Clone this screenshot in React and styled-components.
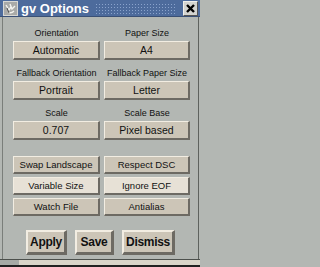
import React from "react";
import styled, { createGlobalStyle } from "styled-components";

const GlobalStyle = createGlobalStyle`
  html, body {
    margin: 0;
    padding: 0;
    background: #b3b7b3;
  }
  body {
    font-family: "Liberation Sans", Arial, sans-serif;
  }
`;

const fields = [
  { label: "Orientation", value: "Automatic" },
  { label: "Paper Size", value: "A4" },
  { label: "Fallback Orientation", value: "Portrait" },
  { label: "Fallback Paper Size", value: "Letter" },
  { label: "Scale", value: "0.707" },
  { label: "Scale Base", value: "Pixel based" },
];

const toggles = [
  { label: "Swap Landscape", on: false },
  { label: "Respect DSC", on: false },
  { label: "Variable Size", on: true },
  { label: "Ignore EOF", on: true },
  { label: "Watch File", on: false },
  { label: "Antialias", on: false },
];

const actions = [
  { label: "Apply", width: 41 },
  { label: "Save", width: 39 },
  { label: "Dismiss", width: 53 },
];

const GvIcon = () => (
  <svg width="15" height="15" viewBox="0 0 15 15">
    <rect x="0" y="0" width="15" height="15" fill="#a9aaa8" />
    <rect x="0.5" y="0.5" width="14" height="14" fill="none" stroke="#d8d8d4" />
    <path
      d="M3 4 L6 9 L8 6 M7 3 L9 8 L12 5 M5 11 Q8 13 11 10"
      stroke="#f4f4f0"
      strokeWidth="1.4"
      fill="none"
    />
    <path d="M4 7 L6 12" stroke="#4c4c4c" strokeWidth="1" />
  </svg>
);

const CloseIcon = () => (
  <svg width="11" height="11" viewBox="0 0 11 11">
    <path d="M2 2 L9 9 M9 2 L2 9" stroke="#000" strokeWidth="2.4" />
  </svg>
);

const App = () => {
  return (
    <>
      <GlobalStyle />
      <Window>
        <TitleBar>
          <IconBox>
            <GvIcon />
          </IconBox>
          <Title>gv Options</Title>
          <Dots />
          <CloseButton>
            <CloseIcon />
          </CloseButton>
        </TitleBar>
        <Body>
          <FieldGrid>
            {fields.map((f) => (
              <Field key={f.label}>
                <Label>{f.label}</Label>
                <ValueButton>{f.value}</ValueButton>
              </Field>
            ))}
          </FieldGrid>
          <ToggleGrid>
            {toggles.map((t) => (
              <Toggle key={t.label} $on={t.on}>
                {t.label}
              </Toggle>
            ))}
          </ToggleGrid>
          <Actions>
            {actions.map((a) => (
              <ActionButton key={a.label} $width={a.width}>
                {a.label}
              </ActionButton>
            ))}
          </Actions>
        </Body>
        <BottomStrip>
          <StripStart />
        </BottomStrip>
      </Window>
    </>
  );
};

const Window = styled.div`
  width: 200px;
  height: 267px;
  display: flex;
  flex-direction: column;
  background-color: #b3b7b3;
  overflow: hidden;
`;

const TitleBar = styled.div`
  height: 17px;
  display: flex;
  align-items: center;
  background-color: #4d6b9c;
  border-bottom: 1px solid #3a5075;
  box-sizing: border-box;
`;

const IconBox = styled.div`
  width: 15px;
  height: 15px;
  margin-left: 3px;
  display: flex;
`;

const Title = styled.div`
  margin-left: 3px;
  color: #ffffff;
  font-family: "Liberation Sans", Arial, sans-serif;
  font-weight: bold;
  font-size: 13px;
  line-height: 15px;
  white-space: nowrap;
`;

const Dots = styled.div`
  flex: 1;
  height: 11px;
  margin: 0 6px 0 6px;
  background-image: radial-gradient(circle, #8aa3cc 0.7px, transparent 0.9px);
  background-size: 3px 3px;
`;

const CloseButton = styled.div`
  width: 15px;
  height: 15px;
  margin-right: 2px;
  display: flex;
  align-items: center;
  justify-content: center;
  background-color: #d4d4d0;
  border: 1px solid #f0f0ec;
  border-right-color: #555;
  border-bottom-color: #555;
  box-sizing: border-box;
`;

const Body = styled.div`
  flex: 1;
  display: flex;
  flex-direction: column;
  padding: 10px 0 0 10px;
  border-left: 1px solid #7a7e7a;
  border-right: 1px solid #5e625e;
  margin: 0 1px 0 2px;
  box-shadow: inset 0 -1px 0 #5e625e;
`;

const FieldGrid = styled.div`
  display: grid;
  grid-template-columns: 87px 86px;
  column-gap: 4px;
  row-gap: 7px;
`;

const Field = styled.div`
  display: flex;
  flex-direction: column;
  align-items: stretch;
`;

const Label = styled.div`
  height: 12px;
  line-height: 12px;
  text-align: center;
  font-family: "Liberation Sans", Arial, sans-serif;
  font-size: 9px;
  color: #111;
  white-space: nowrap;
  margin-left: -4px;
  margin-right: -4px;
`;

const ValueButton = styled.div`
  height: 19px;
  margin-top: 2px;
  box-sizing: border-box;
  display: flex;
  align-items: center;
  justify-content: center;
  background-color: #ccc5b7;
  border: 1px solid #f2ede2;
  border-right: 2px solid #6d6a63;
  border-bottom: 2px solid #6d6a63;
  font-family: "Liberation Sans", Arial, sans-serif;
  font-size: 10.5px;
  color: #111;
  white-space: nowrap;
`;

const ToggleGrid = styled.div`
  display: grid;
  grid-template-columns: 87px 86px;
  column-gap: 4px;
  row-gap: 3px;
  margin-top: 16px;
`;

const Toggle = styled.div`
  height: 18px;
  box-sizing: border-box;
  display: flex;
  align-items: center;
  justify-content: center;
  background-color: ${(p) => (p.$on ? "#e7e1d6" : "#ccc5b7")};
  border: 1px solid #f2ede2;
  border-right: 2px solid #6d6a63;
  border-bottom: 2px solid #6d6a63;
  font-family: "Liberation Sans", Arial, sans-serif;
  font-size: 9.5px;
  color: #111;
  white-space: nowrap;
`;

const Actions = styled.div`
  display: flex;
  gap: 8px;
  margin-top: 14px;
  padding-left: 13px;
`;

const ActionButton = styled.div`
  width: ${(p) => p.$width}px;
  height: 25px;
  box-sizing: border-box;
  display: flex;
  align-items: center;
  justify-content: center;
  background-color: #ccc5b7;
  border: 2px solid #f2ede2;
  border-right: 3px solid #6d6a63;
  border-bottom: 3px solid #6d6a63;
  font-family: "Liberation Sans", Arial, sans-serif;
  font-weight: bold;
  font-size: 12px;
  letter-spacing: -0.3px;
  color: #111;
`;

const BottomStrip = styled.div`
  height: 8px;
  display: flex;
  background-color: #d9d4c8;
  border-top: 1px solid #4c504c;
  border-bottom: 2px solid #202020;
  box-sizing: border-box;
  margin-top: -4px;
`;

const StripStart = styled.div`
  width: 19px;
  background-color: #a6aaa6;
`;

export default App;
